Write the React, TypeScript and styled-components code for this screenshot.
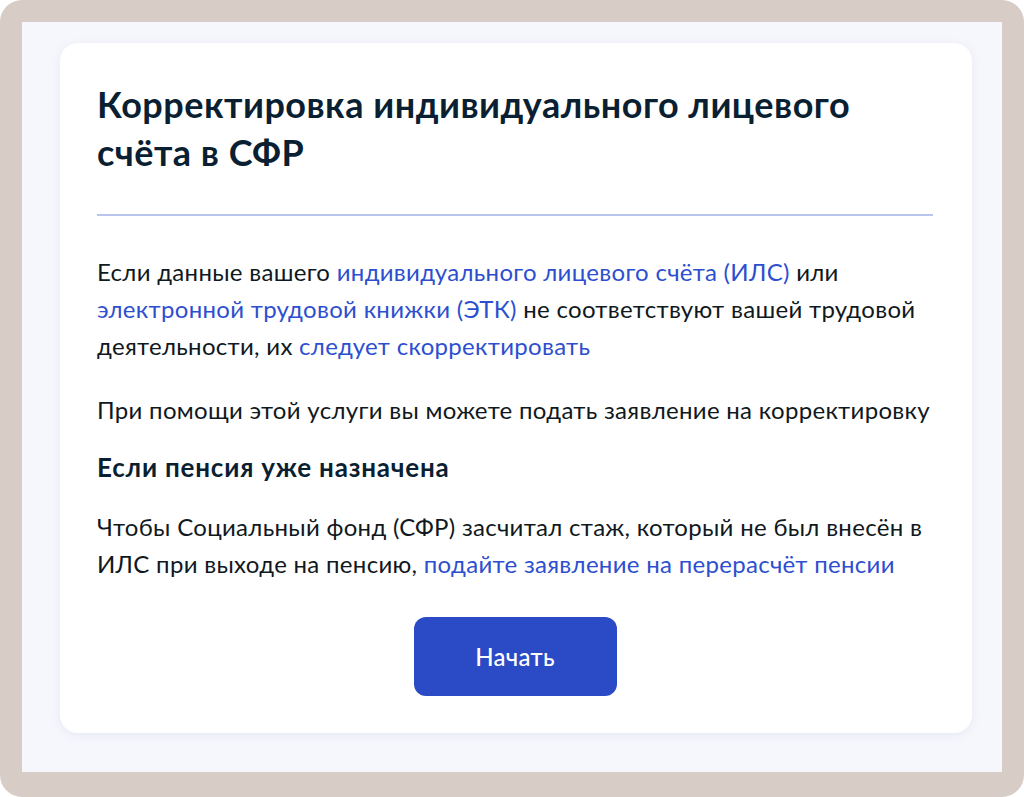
import React from "react";
import styled, { createGlobalStyle } from "styled-components";

const GlobalStyle = createGlobalStyle`
  html, body { margin: 0; padding: 0; background: #ffffff; }
  body { font-family: Lato, "Noto Sans", sans-serif; -webkit-font-smoothing: antialiased; }
  * { box-sizing: border-box; }
`;

const Frame = styled.div`
  width: 1024px;
  height: 797px;
  background: #d7cdc6;
  border-radius: 22px;
  padding: 22px 22px 25px 22px;
`;

const Stage = styled.div`
  height: 100%;
  background: #f6f7fc;
  padding: 21px 30px 39px 38px;
`;

const Card = styled.section`
  height: 100%;
  background: #ffffff;
  border-radius: 18px;
  box-shadow: 0 2px 10px rgba(140, 150, 190, 0.14);
  padding: 37px 30px 36px 37px;
  display: flex;
  flex-direction: column;
  color: #0b1f33;
  & > * { flex-shrink: 0; }
`;

const Title = styled.h1`
  margin: 0;
  font-size: 36px;
  line-height: 48px;
  letter-spacing: 0.5px;
  font-weight: 700;
  color: #0b1f33;
`;

const Divider = styled.hr`
  margin: 38px 9px 0 0;
  border: none;
  height: 2px;
  background: #b9c5ec;
`;

const Paragraph = styled.p<{ $gap: number }>`
  margin: ${(p) => p.$gap}px 0 0 0;
  font-size: 24px;
  line-height: 37px;
  letter-spacing: 0.3px;
  font-weight: 400;
  color: #101820;
`;

const Subheading = styled.h2`
  margin: 21px 0 0 0;
  font-size: 26px;
  line-height: 37px;
  letter-spacing: 0.8px;
  font-weight: 700;
  color: #0b1f33;
`;

const Link = styled.a`
  color: #2d4fcf;
  text-decoration: none;
  cursor: pointer;
`;

const Actions = styled.div`
  margin-top: 35px;
  padding-right: 9px;
  display: flex;
  justify-content: center;
`;

const StartButton = styled.button`
  width: 203px;
  height: 79px;
  border: none;
  border-radius: 12px;
  background: #2b4ac5;
  color: #ffffff;
  font-family: Lato, "Noto Sans", sans-serif;
  font-size: 24px;
  letter-spacing: 0.3px;
  font-weight: 500;
  cursor: pointer;
`;

export default function App() {
  return (
    <>
      <GlobalStyle />
      <Frame>
        <Stage>
          <Card>
            <Title>
              Корректировка индивидуального лицевого
              <br />
              счёта в СФР
            </Title>
            <Divider />
            <Paragraph $gap={37}>
              Если данные вашего <Link>индивидуального лицевого счёта (ИЛС)</Link> или
              <br />
              <Link>электронной трудовой книжки (ЭТК)</Link> не соответствуют вашей трудовой
              <br />
              деятельности, их <Link>следует скорректировать</Link>
            </Paragraph>
            <Paragraph $gap={27}>
              При помощи этой услуги вы можете подать заявление на корректировку
            </Paragraph>
            <Subheading>Если пенсия уже назначена</Subheading>
            <Paragraph $gap={22}>
              Чтобы Социальный фонд (СФР) засчитал стаж, который не был внесён в
              <br />
              ИЛС при выходе на пенсию, <Link>подайте заявление на перерасчёт пенсии</Link>
            </Paragraph>
            <Actions>
              <StartButton>Начать</StartButton>
            </Actions>
          </Card>
        </Stage>
      </Frame>
    </>
  );
}
